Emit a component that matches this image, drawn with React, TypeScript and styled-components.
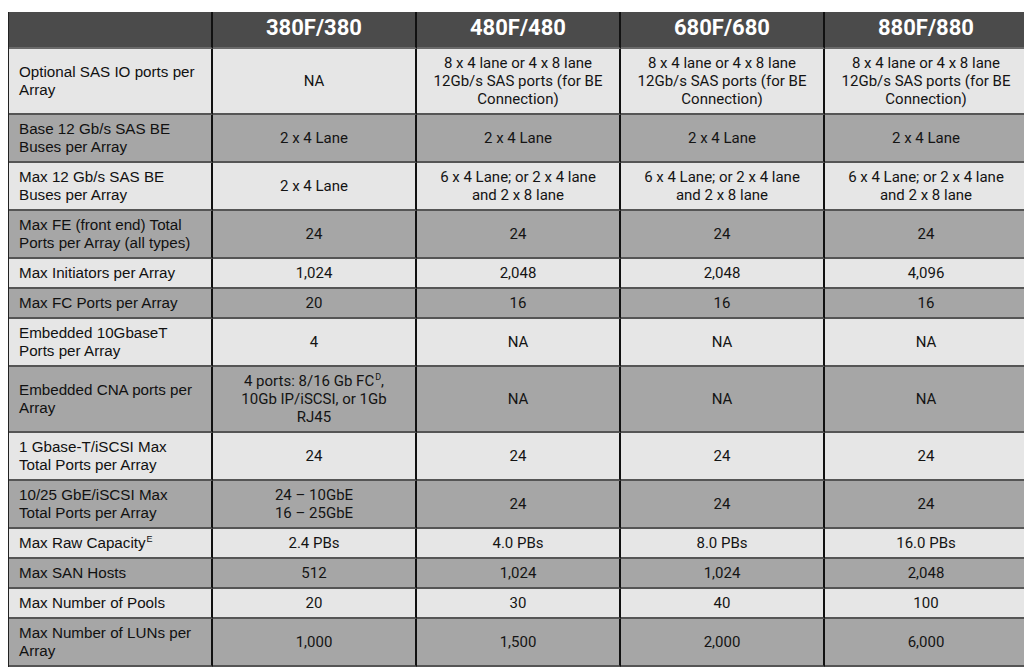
import React from "react";
import styled, { createGlobalStyle } from "styled-components";

const Global = createGlobalStyle`
  html, body { margin: 0; padding: 0; background: #ffffff; overflow: hidden; }
  #root { width: 1024px; height: 667px; overflow: hidden; }
`;

const Page = styled.div`
  padding: 12px 0 0 8px;
  width: 1040px;
`;

const Grid = styled.div`
  display: grid;
  grid-template-columns: repeat(5, 204px);
  border-left: 1px solid #222;
`;

const HeadCell = styled.div`
  background: #4b4b4b;
  color: #ffffff;
  font-family: Roboto, "Liberation Sans", sans-serif;
  font-weight: 700;
  font-size: 22px;
  line-height: 26px;
  height: 37px;
  box-sizing: border-box;
  padding: 3px 0 6px;
  text-align: center;
  border-right: 2px solid #111;
  border-bottom: 2px solid #6a6a6a;
`;

const Label = styled.div<{ $dark: boolean }>`
  background: ${(p) => (p.$dark ? "#a6a6a6" : "#e6e6e6")};
  color: #111;
  font-family: "Liberation Sans", Arial, sans-serif;
  font-size: 15.2px;
  line-height: 18px;
  padding: 5px 14px 5px 10px;
  display: flex;
  align-items: center;
  border-right: 2px solid #111;
  border-bottom: 2px solid #555;
`;

const Value = styled.div<{ $dark: boolean }>`
  background: ${(p) => (p.$dark ? "#a6a6a6" : "#e6e6e6")};
  color: #141414;
  font-family: Roboto, "Liberation Sans", sans-serif;
  font-size: 15px;
  line-height: 18px;
  padding: 5px 12px;
  display: flex;
  align-items: center;
  justify-content: center;
  text-align: center;
  border-right: 2px solid #111;
  border-bottom: 2px solid #555;
`;

const Sup = styled.span`
  font-size: 9px;
  line-height: 10px;
  vertical-align: top;
  margin-left: 1px;
`;

type Row = { label: React.ReactNode; values: React.ReactNode[] };

const sasOpt = "8 x 4 lane or 4 x 8 lane 12Gb/s SAS ports (for BE Connection)";
const maxSas = "6 x 4 Lane; or 2 x 4 lane and 2 x 8 lane";

const rows: Row[] = [
  { label: "Optional SAS IO ports per Array", values: ["NA", sasOpt, sasOpt, sasOpt] },
  { label: "Base 12 Gb/s SAS BE Buses per Array", values: ["2 x 4 Lane", "2 x 4 Lane", "2 x 4 Lane", "2 x 4 Lane"] },
  { label: "Max 12 Gb/s SAS BE Buses per Array", values: ["2 x 4 Lane", maxSas, maxSas, maxSas] },
  { label: "Max FE (front end) Total Ports per Array (all types)", values: ["24", "24", "24", "24"] },
  { label: "Max Initiators per Array", values: ["1,024", "2,048", "2,048", "4,096"] },
  { label: "Max FC Ports per Array", values: ["20", "16", "16", "16"] },
  { label: "Embedded 10GbaseT Ports per Array", values: ["4", "NA", "NA", "NA"] },
  {
    label: "Embedded CNA ports per Array",
    values: [
      <span key="c">
        4 ports: 8/16 Gb FC<Sup>D</Sup>, 10Gb IP/iSCSI, or 1Gb RJ45
      </span>,
      "NA",
      "NA",
      "NA",
    ],
  },
  { label: "1 Gbase-T/iSCSI Max Total Ports per Array", values: ["24", "24", "24", "24"] },
  {
    label: "10/25 GbE/iSCSI Max Total Ports per Array",
    values: [
      <span key="g">
        24 – 10GbE
        <br />
        16 – 25GbE
      </span>,
      "24",
      "24",
      "24",
    ],
  },
  {
    label: (
      <span>
        Max Raw Capacity<Sup>E</Sup>
      </span>
    ),
    values: ["2.4 PBs", "4.0 PBs", "8.0 PBs", "16.0 PBs"],
  },
  { label: "Max SAN Hosts", values: ["512", "1,024", "1,024", "2,048"] },
  { label: "Max Number of Pools", values: ["20", "30", "40", "100"] },
  { label: "Max Number of LUNs per Array", values: ["1,000", "1,500", "2,000", "6,000"] },
  { label: "\u00a0", values: ["\u00a0", "\u00a0", "\u00a0", "\u00a0"] },
];

const models = ["", "380F/380", "480F/480", "680F/680", "880F/880"];

export default function App() {
  return (
    <Page>
      <Global />
      <Grid>
        {models.map((m, i) => (
          <HeadCell key={"h" + i}>{m}</HeadCell>
        ))}
        {rows.map((r, ri) => {
          const dark = ri % 2 === 1;
          return (
            <React.Fragment key={ri}>
              <Label $dark={dark}>{r.label}</Label>
              {r.values.map((v, vi) => (
                <Value key={vi} $dark={dark}>
                  {v}
                </Value>
              ))}
            </React.Fragment>
          );
        })}
      </Grid>
    </Page>
  );
}
